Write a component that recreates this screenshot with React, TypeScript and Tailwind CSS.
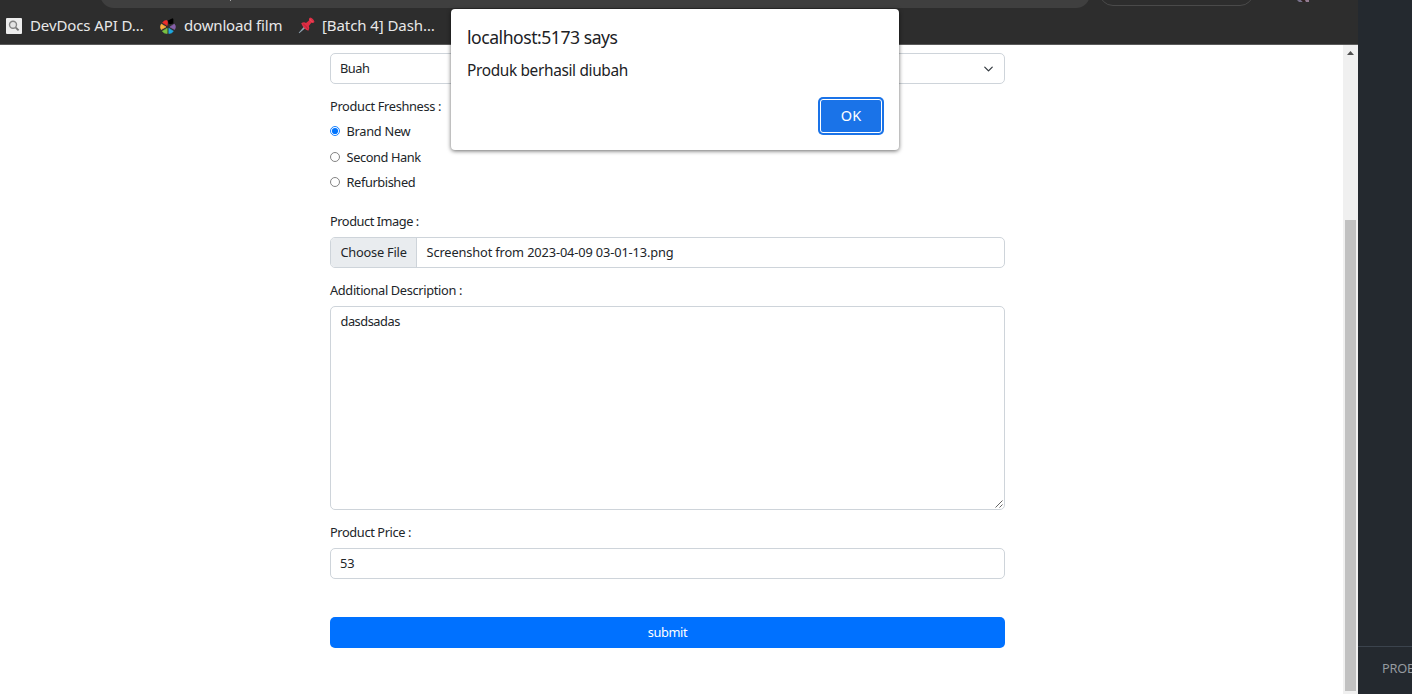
import React from "react";

function SearchFavicon() {
  return (
    <svg width="16" height="16" viewBox="0 0 16 16" className="shrink-0">
      <rect width="16" height="16" rx="1" fill="#ededed" />
      <circle cx="7" cy="6.8" r="3.5" fill="#e4e4e4" stroke="#858585" strokeWidth="1.4" />
      <path d="M9.8 9.6L12.6 12.4" stroke="#777" strokeWidth="1.9" />
    </svg>
  );
}

function ReelFavicon() {
  return (
    <svg width="16" height="16" viewBox="0 0 16 16" className="shrink-0">
      <path d="M8.4 5.6L8 2.4L12.5 0.2L13.4 1V5.4L10 6.3Z" fill="#000" />
      <path d="M7.2 7.6L2.6 4.8Q3.8 2.2 6.8 2.4L7.6 4Z" fill="#ee2d2a" stroke="#ee2d2a" strokeWidth="0.6" />
      <path d="M6 8.9L1.2 11.6Q-0.4 9 1.3 6.1Z" fill="#fbb040" stroke="#fbb040" strokeWidth="0.6" />
      <path d="M7.2 10.2V15.5Q4.2 15.8 2.3 13.2Z" fill="#7ac143" stroke="#7ac143" strokeWidth="0.6" />
      <path d="M8.8 10.2L13.4 13.2Q11.6 15.8 8.8 15.5Z" fill="#1fa8e0" stroke="#1fa8e0" strokeWidth="0.6" />
      <path d="M9.8 8.9L14.3 6.1Q16.6 8.6 14.6 11.6Z" fill="#8560a8" stroke="#8560a8" strokeWidth="0.6" />
    </svg>
  );
}

function PinFavicon() {
  return (
    <svg width="17" height="17" viewBox="0 0 17 17" className="shrink-0">
      <path d="M6.3 9.3L7.7 10.7L1.3 16.3L0.7 15.7Z" fill="#8fa3b0" />
      <path d="M3.2 6.2Q6 4.6 8 6L11 3.6Q10.6 1.7 12 0.6Q15.4 1.3 16.5 5Q15.2 6.3 13.4 5.8L10.8 9Q12.3 11.3 10.4 13.8Q5.5 12 3.2 6.2Z" fill="#dd2e44" />
      <path d="M5.2 6.9Q7.6 8.2 10 12" stroke="#a9152f" strokeWidth="0.6" fill="none" />
      <path d="M11.6 2.2Q13.3 3.4 14.6 5.2" stroke="#f4616e" strokeWidth="0.7" fill="none" />
    </svg>
  );
}

function Radio({ checked = false }: { checked?: boolean }) {
  return (
    <svg width="10" height="10" viewBox="0 0 10 10" className="mb-[2px] shrink-0">
      <circle cx="5" cy="5" r="4.5" fill="#fff" stroke={checked ? "#0075ff" : "#767676"} strokeWidth="0.9" />
      {checked && <circle cx="5" cy="5" r="3.1" fill="#0075ff" />}
    </svg>
  );
}

export default function App() {
  return (
    <div className="relative flex h-[694px] w-[1412px] overflow-hidden bg-white font-['Noto_Sans',sans-serif] whitespace-nowrap text-[#212529]">
      <div className="flex w-[1358px] shrink-0 flex-col">
        <header className="flex h-[45px] shrink-0 flex-col border-b border-[#5a5a5a] bg-[#2d2d2d]">
          <div className="flex h-2 items-end pl-[100px]">
            <div className="flex h-7 w-[990px] shrink-0 items-end rounded-b-[14px] bg-[#3f3f3f] pl-[130px]">
              <span className="mb-[7px] h-0.5 w-px bg-[#aaa]" />
            </div>
            <div className="mb-[2px] ml-[9px] h-7 w-[155px] shrink-0 rounded-b-[14px] border border-[#4a4a4a]" />
            <svg width="14" height="3" viewBox="0 0 14 3" className="mb-[5px] ml-[43px] shrink-0">
              <path d="M0 0H4L6 2H2Z" fill="#77708a" />
              <path d="M4 0H8V2H6Z" fill="#30201f" />
              <path d="M8 0H12V2H9Z" fill="#947b91" />
            </svg>
          </div>
          <nav className="flex h-9 items-center pb-px pl-1.5 text-[15px] text-[#e8e8e8]">
            <div className="flex w-[154px] items-center gap-2"><SearchFavicon /><span className="tracking-[-0.1px]">DevDocs API D…</span></div>
            <div className="flex w-[138px] items-center gap-2"><ReelFavicon /><span className="tracking-[-0.17px]">download film</span></div>
            <div className="flex items-center gap-[7px]"><PinFavicon /><span className="tracking-[-0.08px]">[Batch 4] Dash…</span></div>
          </nav>
        </header>

        <div className="flex min-h-0 flex-1">
          <form className="flex flex-1 flex-col pt-2 pr-[338px] pl-[330px] text-[12.8px] leading-[19px]">
            <div className="flex h-[31px] items-center justify-between rounded-[5px] border border-[#ced4da] pr-2.5 pl-[9px]">
              <span className="tracking-[-0.5px]">Buah</span>
              <svg width="11" height="10" viewBox="0 0 16 16" className="shrink-0">
                <path d="M2 5l6 6 6-6" fill="none" stroke="#343a40" strokeWidth="2" strokeLinecap="round" strokeLinejoin="round" />
              </svg>
            </div>
            <div className="mt-[13px] tracking-[-0.33px]">Product Freshness :</div>
            <div className="mt-[6px] flex h-[19px] items-center gap-[6.5px]"><Radio checked /><span className="tracking-[-0.28px]">Brand New</span></div>
            <div className="mt-[7px] flex h-[19px] items-center gap-[6.5px]"><Radio /><span className="tracking-[-0.4px]">Second Hank</span></div>
            <div className="mt-[6px] flex h-[19px] items-center gap-[6.5px]"><Radio /><span className="tracking-[-0.4px]">Refurbished</span></div>

            <div className="mt-5 tracking-[-0.46px]">Product Image :</div>
            <div className="mt-[6px] flex h-[31px] shrink-0 overflow-hidden rounded-[5px] border border-[#ced4da]">
              <span className="flex w-[86px] items-center border-r border-[#ced4da] bg-[#e9ecef] pl-[9.5px] tracking-[-0.22px]">Choose File</span>
              <span className="flex items-center pl-[9.5px] tracking-[-0.13px]">Screenshot from 2023-04-09 03-01-13.png</span>
            </div>

            <div className="mt-[13px] tracking-[-0.34px]">Additional Description :</div>
            <div className="mt-[6px] flex h-[204px] shrink-0 justify-between rounded-[5px] border border-[#ced4da] pt-[5px] pl-[9.5px]">
              <span className="tracking-[-0.47px]">dasdsadas</span>
              <svg width="9" height="9" viewBox="0 0 9 9" className="self-end">
                <path d="M0.5 7.5L7.5 0.5M4.5 7.5L7.5 4.5" stroke="#555" strokeWidth="0.9" />
              </svg>
            </div>

            <div className="mt-[13px] tracking-[-0.38px]">Product Price :</div>
            <div className="mt-[6px] flex h-[31px] shrink-0 items-center rounded-[5px] border border-[#ced4da] pl-[9px]">53</div>
            <button type="button" className="mt-[38px] h-[31px] shrink-0 rounded-[5px] bg-[#0071ff] tracking-[-0.4px] text-white">submit</button>
          </form>

          <div className="flex w-[15px] shrink-0 flex-col items-center bg-[#f0f0f0]">
            <svg width="7" height="4" viewBox="0 0 7 4" className="mt-1.5 shrink-0">
              <path d="M0 4L3.5 0L7 4Z" fill="#505050" />
            </svg>
            <div className="mt-[165px] h-[471px] w-[11px] shrink-0 bg-[#c1c1c1]" />
          </div>
        </div>
      </div>

      <aside className="flex w-[54px] shrink-0 flex-col overflow-hidden bg-[#24292f]">
        <div className="h-[646px] shrink-0" />
        <div className="flex h-12 items-center border-t border-[#3b434d] pb-[3px] pl-6 text-[12.8px] tracking-[-0.2px] text-[#959a9f]">PROBLEMS</div>
      </aside>

      <div role="alertdialog" className="absolute top-[9px] left-[451px] flex h-[141px] w-[448px] flex-col rounded-[4px] bg-white pt-4 pr-4 pl-4 text-[#202124] shadow-[0_1px_4px_rgba(0,0,0,0.6)]">
        <h1 className="text-[17.6px] leading-[25px] tracking-[-0.48px]">localhost:5173 says</h1>
        <p className="mt-2 text-[15.4px] leading-[25px] tracking-[-0.34px]">Produk berhasil diubah</p>
        <button type="button" className="mt-4 mr-[1px] h-[34px] w-[62px] self-end rounded-[3px] border border-white bg-[#1a73e8] text-[14.5px] text-white shadow-[0_0_0_2px_#1a73e8]">OK</button>
      </div>
    </div>
  );
}
